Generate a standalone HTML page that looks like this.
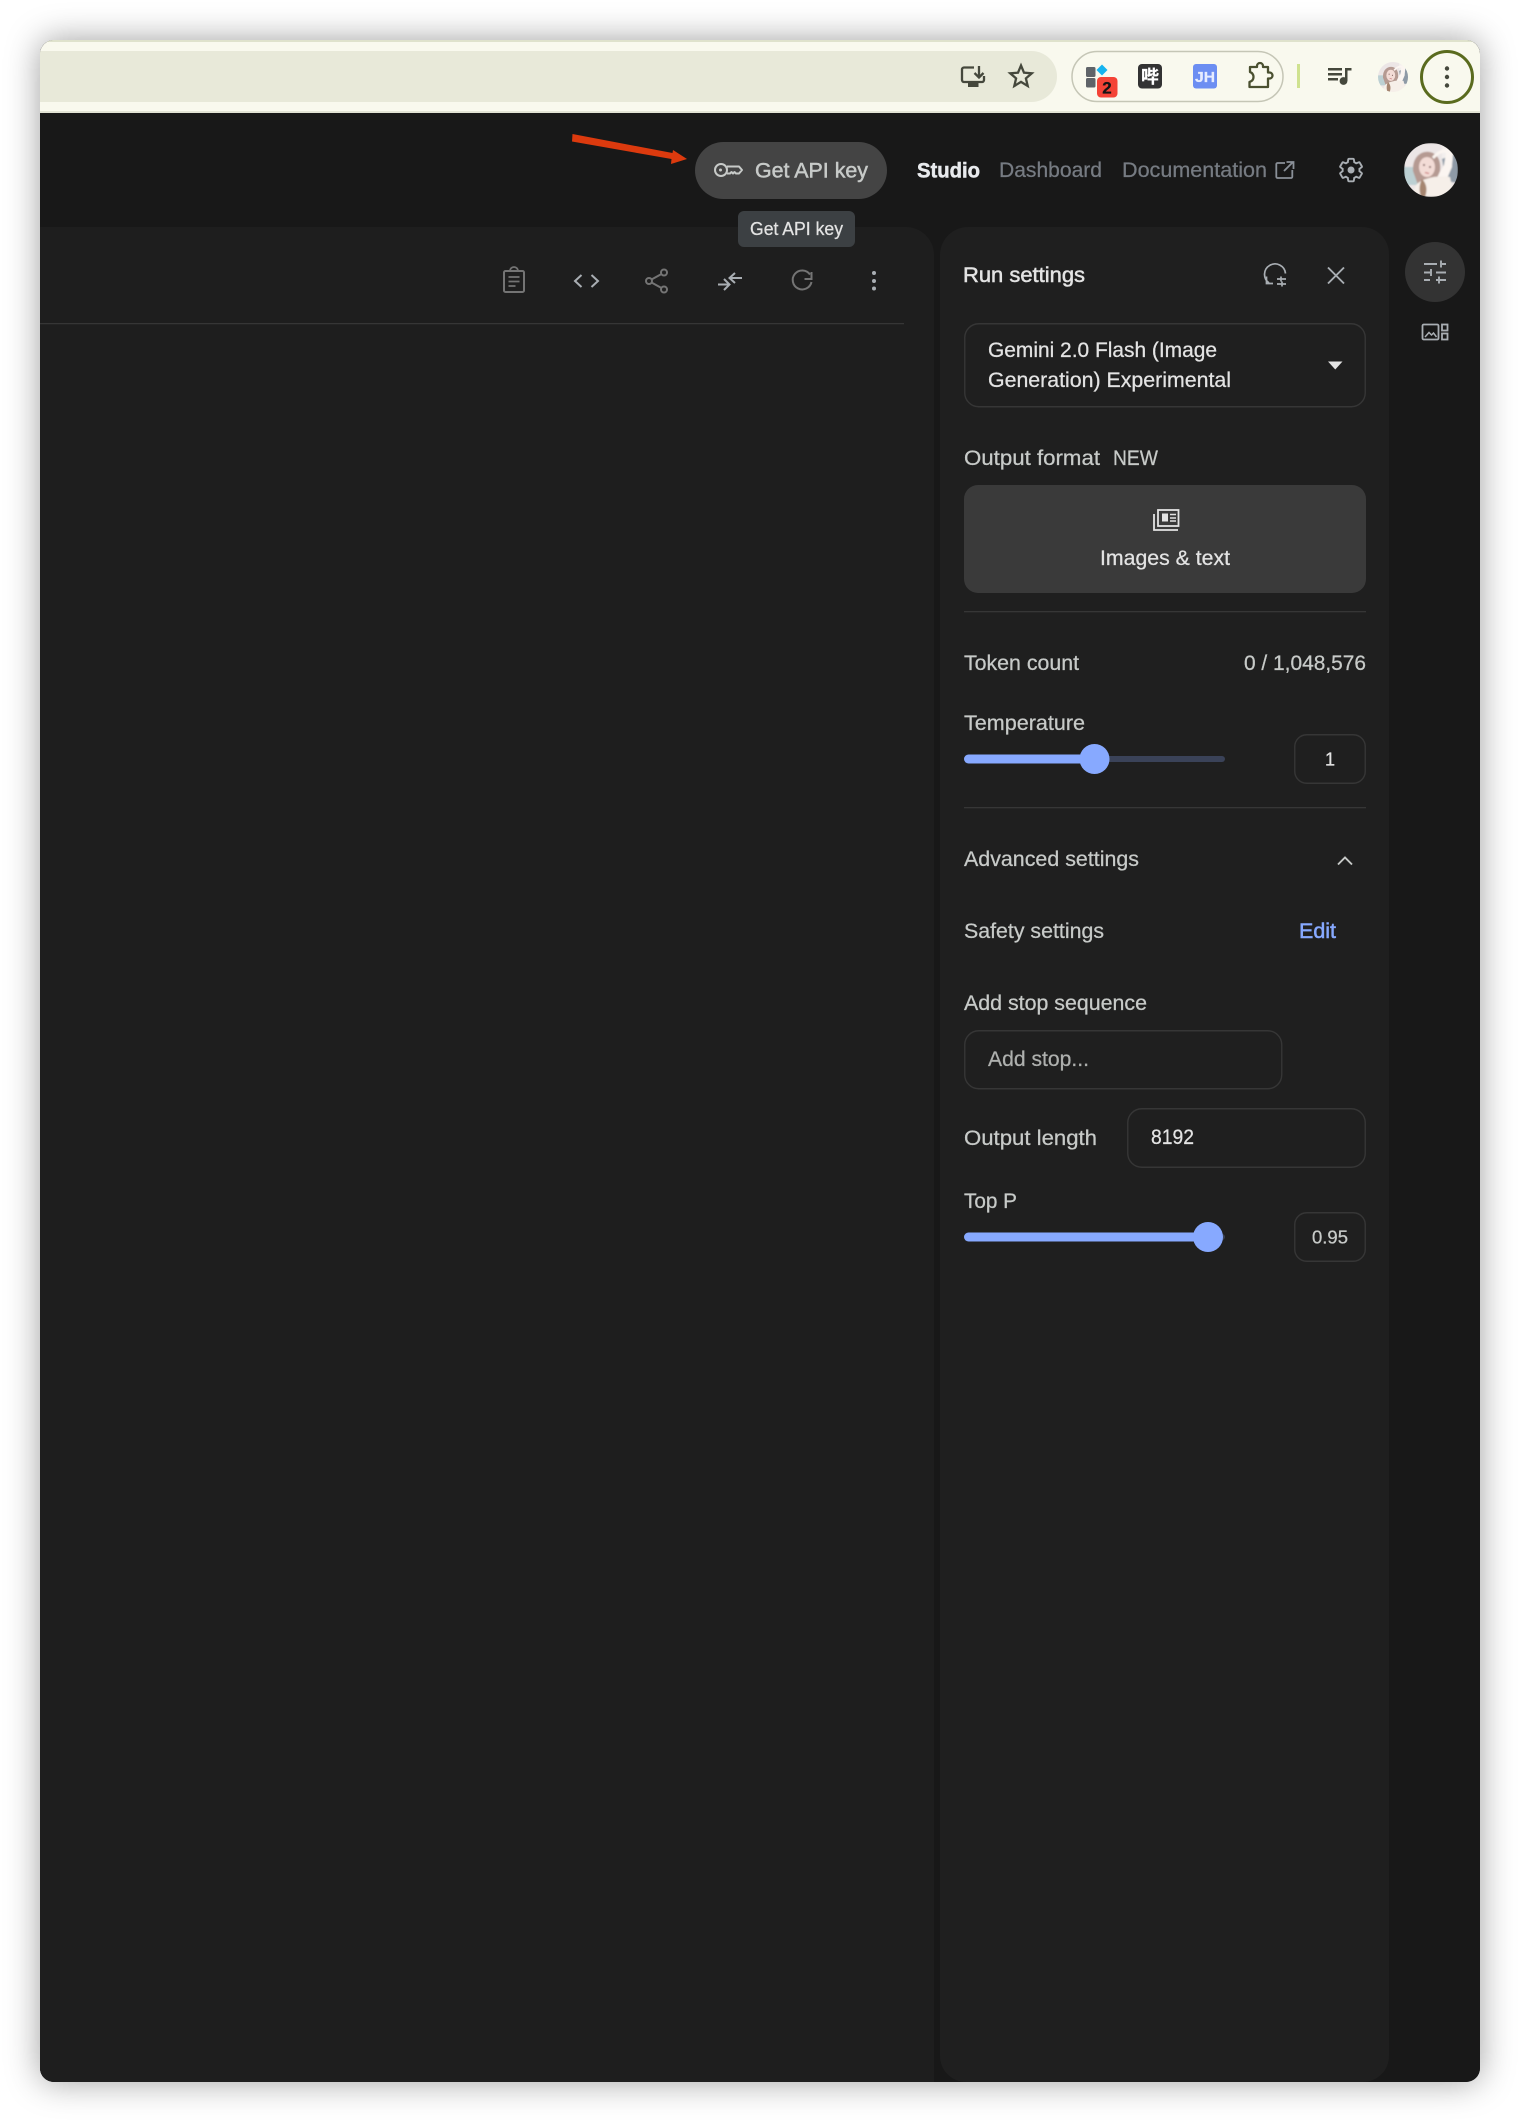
<!DOCTYPE html>
<html lang="en"><head><meta charset="utf-8"><title>Run settings</title>
<style>
html,body{margin:0;padding:0;background:#fff;width:1520px;height:2122px;overflow:hidden}
#win{position:absolute;left:40px;top:40px;width:1440px;height:2042px;border-radius:14px;overflow:hidden;box-shadow:0 0 34px rgba(0,0,0,.38);background:#181818}
svg{display:block}
text{font-family:"Liberation Sans","Noto Sans CJK SC",sans-serif;font-size:21px;color:#c7cac8;fill:currentColor;stroke:currentColor;stroke-width:.25}
.w{color:#e3e3e3}
.ic{fill:none;stroke:#a9aeb3;stroke-width:2;stroke-linecap:butt;stroke-linejoin:round}
.g{stroke:#747474}
.box{fill:none;stroke:#363636;stroke-width:1.400}
</style></head><body>
<div id="win">
<svg width="1440" height="2042" viewBox="40 40 1440 2042" xmlns="http://www.w3.org/2000/svg">
<defs>
<clipPath id="avc"><circle cx="27" cy="27" r="27"/></clipPath>
<filter id="soft"><feGaussianBlur stdDeviation=".7"/></filter>
<g id="av" clip-path="url(#avc)"><g filter="url(#soft)">
<rect width="54" height="54" fill="#ece6e6"/>
<rect x="0" y="24" width="14" height="18" fill="#bcd0d3"/>
<rect x="38" y="0" width="16" height="20" fill="#f3efed"/>
<path d="M38 16l16-6v30l-12-2z" fill="#8e9aa6"/>
<path d="M9 28C8 11 21 6 29 10c6 3 8 10 7 18l-5 12-17 2z" fill="#b59a92"/>
<ellipse cx="23" cy="24" rx="8" ry="10" fill="#f3dcd6"/>
<path d="M28 14c6-8 16-10 20-6 2 4 0 10 0 16l-6 14-12 2 10-18 2-12c-4-1-8 2-12 6z" fill="#fbf5f1"/>
<path d="M12 42c6-7 22-10 34-8l4 20H8z" fill="#f6efe9"/>
<path d="M18 36c4 4 6 10 3 18h-4c-2-6-2-12 1-18z" fill="#a58570"/>
<circle cx="20" cy="22" r="1" fill="#7a5a56"/><circle cx="26" cy="24" r="1" fill="#7a5a56"/>
<path d="M21 29.500l4 1" stroke="#cf8585" stroke-width="1.400"/>
</g></g>
</defs>

<!-- base -->
<rect x="40" y="40" width="1440" height="2042" fill="#181818"/>

<!-- browser toolbar -->
<rect x="40" y="40" width="1440" height="73" fill="#f9f9ee"/>
<rect x="40" y="40" width="1440" height="2" fill="#dfe2cc"/>
<rect x="40" y="111" width="1440" height="2" fill="#e2e3d4"/>
<path d="M40 51H1031.500a25.500 25.500 0 0 1 0 51H40z" fill="#e8e9d9"/>

<!-- monitor download -->
<g fill="none" stroke="#45483c" stroke-width="2.300">
<path d="M974 67.500H964a2 2 0 0 0-2 2V80a2 2 0 0 0 2 2H982a2 2 0 0 0 2-2V76"/>
<path d="M979 66v11.500M974.500 73l4.500 4.500 4.500-4.500"/>
</g>
<rect x="968" y="83" width="10.500" height="4" fill="#45483c"/>
<!-- star -->
<path d="M1021 65.500l3 7.200 7.800.6-5.900 5.100 1.800 7.600-6.700-4.100-6.700 4.100 1.800-7.600-5.900-5.100 7.800-.6z" fill="none" stroke="#45483c" stroke-width="2.300" stroke-linejoin="miter"/>

<!-- extensions pill -->
<rect x="1072" y="51.500" width="211" height="50" rx="25" fill="none" stroke="#c5c6b6" stroke-width="1.500"/>
<rect x="1086" y="67" width="9.500" height="10" rx="1.500" fill="#5f6368"/>
<rect x="1086" y="78" width="9.500" height="9.500" rx="1.500" fill="#5f6368"/>
<path d="M1102 64.500l5.500 5.500-5.500 5.500-5.500-5.500z" fill="#16b4ef"/>
<rect x="1097" y="77" width="20.500" height="20.500" rx="4" fill="#f44336"/>
<text x="1107" y="93.500" text-anchor="middle" style="font-size:17px;font-weight:700;color:#151515">2</text>
<rect x="1138" y="64" width="24" height="24.500" rx="4" fill="#333"/>
<text x="1150" y="83" text-anchor="middle" style="font-size:18px;font-weight:700;color:#fff">哔</text>
<rect x="1193" y="64" width="24" height="24.500" rx="3" fill="#6c8ef2"/>
<text x="1205" y="82" text-anchor="middle" style="font-size:15px;font-weight:700;color:#e6ecff;font-family:'Liberation Sans',sans-serif" textLength="20" lengthAdjust="spacingAndGlyphs">JH</text>
<path d="M1250 67h7v-1a3 3 0 0 1 6 0v1h5v5.500h1.500a3 3 0 0 1 0 6H1268V87h-18.500v-5c3-1 4-3 4-5s-1-4-3.500-5z" fill="none" stroke="#4a5030" stroke-width="2.300" stroke-linejoin="round"/>
<rect x="1297" y="64" width="3" height="24" fill="#cfe28f"/>
<!-- queue music -->
<g fill="#45483c">
<rect x="1328" y="68" width="14" height="2.500"/><rect x="1328" y="73" width="14" height="2.500"/><rect x="1328" y="78" width="10" height="2.500"/>
<rect x="1345" y="68" width="2.500" height="13"/><rect x="1345" y="68" width="6.500" height="2.500"/>
<circle cx="1343.500" cy="81" r="3.900"/>
</g>
<g transform="translate(1378 62) scale(.556)"><use href="#av"/></g>
<circle cx="1447" cy="77" r="25.500" fill="none" stroke="#5a6b1e" stroke-width="3"/>
<circle cx="1447" cy="68.500" r="2.200" fill="#45483c"/><circle cx="1447" cy="77" r="2.200" fill="#45483c"/><circle cx="1447" cy="85.500" r="2.200" fill="#45483c"/>

<!-- panels -->
<path d="M40 227H906a28 28 0 0 1 28 28V2082H40z" fill="#1e1e1e"/>
<path d="M968 227H1362a27 27 0 0 1 27 27V2056a26 26 0 0 1-26 26H966a26 26 0 0 1-26-26V255a28 28 0 0 1 28-28z" fill="#1f1f1f"/>

<!-- arrow -->
<path d="M572.500 134L672.500 153 673 150 687 159 671 164 671.500 159 572 141.500z" fill="#dc3a0e"/>

<!-- api key button -->
<rect x="695" y="142" width="192" height="57" rx="28.500" fill="#444"/>
<g fill="none" stroke="#c7cac8" stroke-width="2">
<circle cx="721" cy="170" r="6"/>
<path d="M727 166.500h12l3 3.500-3 3.500h-3l-1.500-1.500-1.500 1.500-1.500-1.500-1.500 1.500H727" stroke-linejoin="round"/>
</g>
<circle cx="720.500" cy="170" r="1.500" fill="#c7cac8"/>
<text x="755" y="177.500" textLength="113" lengthAdjust="spacingAndGlyphs" style="stroke-width:.5">Get API key</text>

<!-- nav -->
<text x="917" y="177.500" textLength="63" lengthAdjust="spacingAndGlyphs" style="font-weight:700;color:#e8eaed;stroke-width:.5">Studio</text>
<text x="999" y="177" textLength="103" lengthAdjust="spacingAndGlyphs" style="color:#767b82">Dashboard</text>
<text x="1122" y="177" textLength="145" lengthAdjust="spacingAndGlyphs" style="color:#767b82">Documentation</text>
<path d="M1285 163h-7.500a1.200 1.200 0 0 0-1.200 1.200v12.600a1.200 1.200 0 0 0 1.200 1.200h13.600a1.200 1.200 0 0 0 1.200-1.200V170M1284 171l9-9M1286.500 162h7v7" fill="none" stroke="#8a9098" stroke-width="1.800"/>
<g transform="translate(1337 156) scale(1.170)">
<path d="M19.140 12.940c.04-.3.06-.61.06-.94 0-.32-.02-.64-.07-.94l2.030-1.580c.18-.14.23-.41.12-.61l-1.920-3.320c-.12-.22-.37-.29-.59-.22l-2.390.96c-.5-.38-1.030-.7-1.620-.94l-.36-2.540c-.04-.24-.24-.41-.48-.41h-3.840c-.24 0-.43.17-.47.41l-.36 2.540c-.59.24-1.130.57-1.620.94l-2.390-.96c-.22-.08-.47 0-.59.22L2.740 8.870c-.12.21-.08.47.12.61l2.030 1.580c-.05.3-.09.63-.09.94s.02.64.07.94l-2.030 1.580c-.18.14-.23.41-.12.61l1.920 3.320c.12.22.37.29.59.22l2.390-.96c.5.38 1.030.7 1.620.94l.36 2.540c.05.24.24.41.48.41h3.840c.24 0 .44-.17.47-.41l.36-2.540c.59-.24 1.130-.56 1.620-.94l2.390.96c.22.08.47 0 .59-.22l1.920-3.320c.12-.22.07-.47-.12-.61l-2.010-1.580z" fill="none" stroke="#a9aeb3" stroke-width="1.600"/>
<circle cx="12" cy="12" r="3" fill="#a9aeb3"/>
</g>
<g transform="translate(1404 143)"><use href="#av"/></g>

<!-- tooltip -->
<rect x="738" y="211" width="117" height="36" rx="6" fill="#3c4043"/>
<text x="750" y="235" textLength="93" lengthAdjust="spacingAndGlyphs" style="font-size:18px;color:#e3e3e3">Get API key</text>

<!-- left toolbar -->
<g class="ic g">
<rect x="504" y="271" width="20" height="21" rx="1.500"/>
<path d="M510 271a4 4 0 0 1 8 0" stroke-width="1.800"/>
<path d="M508.500 277h11M508.500 281.500h11M508.500 286h7" stroke-width="1.800"/>
</g>
<path class="ic" d="M581.500 275l-6.500 6 6.500 6M591.500 275l6.500 6-6.500 6" style="stroke-linejoin:miter"/>
<g class="ic g">
<circle cx="664" cy="272.500" r="3"/><circle cx="649" cy="281" r="3"/><circle cx="664" cy="289.500" r="3"/>
<path d="M661.500 274l-10 5.500M651.500 282.500l10 5.500"/>
</g>
<path class="ic" d="M742 278h-12.500M735 273l-5.500 5 5.500 5M718 284.500h11.500M724 279l5.500 5.500-5.500 5.500" style="stroke-linejoin:miter"/>
<g class="ic g"><path d="M810 274.500a9.500 9.500 0 1 0 1.500 7.500"/><path d="M811.500 272v7h-7" style="stroke-linejoin:miter"/></g>
<circle cx="874" cy="273" r="2" fill="#a9aeb3"/><circle cx="874" cy="281" r="2" fill="#a9aeb3"/><circle cx="874" cy="288.500" r="2" fill="#a9aeb3"/>
<rect x="40" y="323" width="864" height="1.300" fill="#363636"/>

<!-- run settings head -->
<text class="w" x="963" y="282" textLength="122" lengthAdjust="spacingAndGlyphs" style="stroke-width:.5">Run settings</text>
<g class="ic" style="stroke-width:1.700">
<path d="M1269 283a10.500 10.500 0 1 1 16.500-9.500"/>
<path d="M1266.500 276.500v7h6.500" style="stroke-linejoin:miter"/>
<path d="M1277 279h9M1277 284h9M1281 276.500v5M1282 281.500v5"/>
</g>
<path d="M1328 267.500l16 16M1344 267.500l-16 16" fill="none" stroke="#a9aeb3" stroke-width="1.900"/>

<!-- right rail -->
<circle cx="1435" cy="272" r="30" fill="#333"/>
<g fill="none" stroke="#a9aeb3" stroke-width="1.900">
<path d="M1424 264h13M1442 264h4M1441 260.500v7"/>
<path d="M1424 272.500h6M1436 272.500h10M1431 269v7"/>
<path d="M1424 280h6M1436 280h10M1439 276.500v7"/>
</g>
<g fill="none" stroke="#a9aeb3" stroke-width="1.800">
<rect x="1422.500" y="324.500" width="16" height="15" rx="1.300"/>
<path d="M1425 337l4-4.500 2.500 2.500 2-2 3 4" stroke-width="1.500"/>
<rect x="1442" y="324.500" width="5.500" height="6"/>
<rect x="1442" y="333.500" width="5.500" height="6"/>
</g>

<!-- model select -->
<rect class="box" x="964.750" y="323.750" width="400.500" height="83" rx="14"/>
<text class="w" x="988" y="357" textLength="229" lengthAdjust="spacingAndGlyphs">Gemini 2.0 Flash (Image</text>
<text class="w" x="988" y="387" textLength="243" lengthAdjust="spacingAndGlyphs">Generation) Experimental</text>
<path d="M1328 361.500h14.500l-7.250 8z" fill="#e3e3e3"/>

<!-- output format -->
<text x="964" y="465" textLength="136" lengthAdjust="spacingAndGlyphs">Output format</text>
<text x="1113" y="465" textLength="45" lengthAdjust="spacingAndGlyphs">NEW</text>
<rect x="964" y="485" width="402" height="108" rx="14" fill="#3a3a3a"/>
<g fill="none" stroke="#e3e3e3" stroke-width="1.800">
<rect x="1158" y="510" width="20.500" height="16"/>
<path d="M1154 514v16h24"/>
</g>
<rect x="1162" y="513.500" width="6" height="8" fill="#e3e3e3"/>
<path d="M1170 514.500h6M1170 518h6M1170 521h6" stroke="#e3e3e3" stroke-width="1.400"/>
<text class="w" x="1100" y="565" textLength="130" lengthAdjust="spacingAndGlyphs">Images &amp; text</text>
<rect x="964" y="611" width="402" height="1.300" fill="#363636"/>

<!-- token -->
<text x="964" y="670" textLength="115" lengthAdjust="spacingAndGlyphs">Token count</text>
<text x="1244" y="670" textLength="122" lengthAdjust="spacingAndGlyphs">0 / 1,048,576</text>

<!-- temperature -->
<text x="964" y="730" textLength="121" lengthAdjust="spacingAndGlyphs">Temperature</text>
<rect x="1090" y="756" width="135" height="6" rx="3" fill="#3a4258"/>
<rect x="964" y="754.500" width="130" height="9" rx="4.500" fill="#87a9ff"/>
<circle cx="1094.500" cy="759" r="15" fill="#87a9ff"/>
<rect class="box" x="1294.750" y="734.750" width="70.500" height="48.500" rx="12"/>
<text class="w" x="1330" y="765.500" text-anchor="middle" style="font-size:18px">1</text>
<rect x="964" y="807" width="402" height="1.300" fill="#363636"/>

<!-- advanced -->
<text x="964" y="866" textLength="175" lengthAdjust="spacingAndGlyphs">Advanced settings</text>
<path d="M1338 864.500l7-7 7 7" fill="none" stroke="#c7cac8" stroke-width="1.900"/>
<text x="964" y="938" textLength="140" lengthAdjust="spacingAndGlyphs">Safety settings</text>
<text x="1299" y="938" textLength="37" lengthAdjust="spacingAndGlyphs" style="color:#87a9ff;stroke-width:.5">Edit</text>

<text x="964" y="1010" textLength="183" lengthAdjust="spacingAndGlyphs">Add stop sequence</text>
<rect class="box" x="964.750" y="1030.750" width="317" height="58" rx="14"/>
<text x="988" y="1066" textLength="101" lengthAdjust="spacingAndGlyphs" style="color:#aeb0ae">Add stop...</text>

<text x="964" y="1145" textLength="133" lengthAdjust="spacingAndGlyphs">Output length</text>
<rect class="box" x="1127.750" y="1108.750" width="237.500" height="58.500" rx="14"/>
<text class="w" x="1151" y="1144" textLength="43" lengthAdjust="spacingAndGlyphs">8192</text>

<text x="964" y="1208" textLength="53" lengthAdjust="spacingAndGlyphs">Top P</text>
<rect x="1200" y="1234" width="25" height="6" rx="3" fill="#3a4258"/>
<rect x="964" y="1232.500" width="244" height="9" rx="4.500" fill="#87a9ff"/>
<circle cx="1208" cy="1237" r="15" fill="#87a9ff"/>
<rect class="box" x="1294.750" y="1212.750" width="70.500" height="48.500" rx="12"/>
<text x="1312" y="1243.500" textLength="36" lengthAdjust="spacingAndGlyphs" style="font-size:18px">0.95</text>
</svg>
</div>
</body></html>
